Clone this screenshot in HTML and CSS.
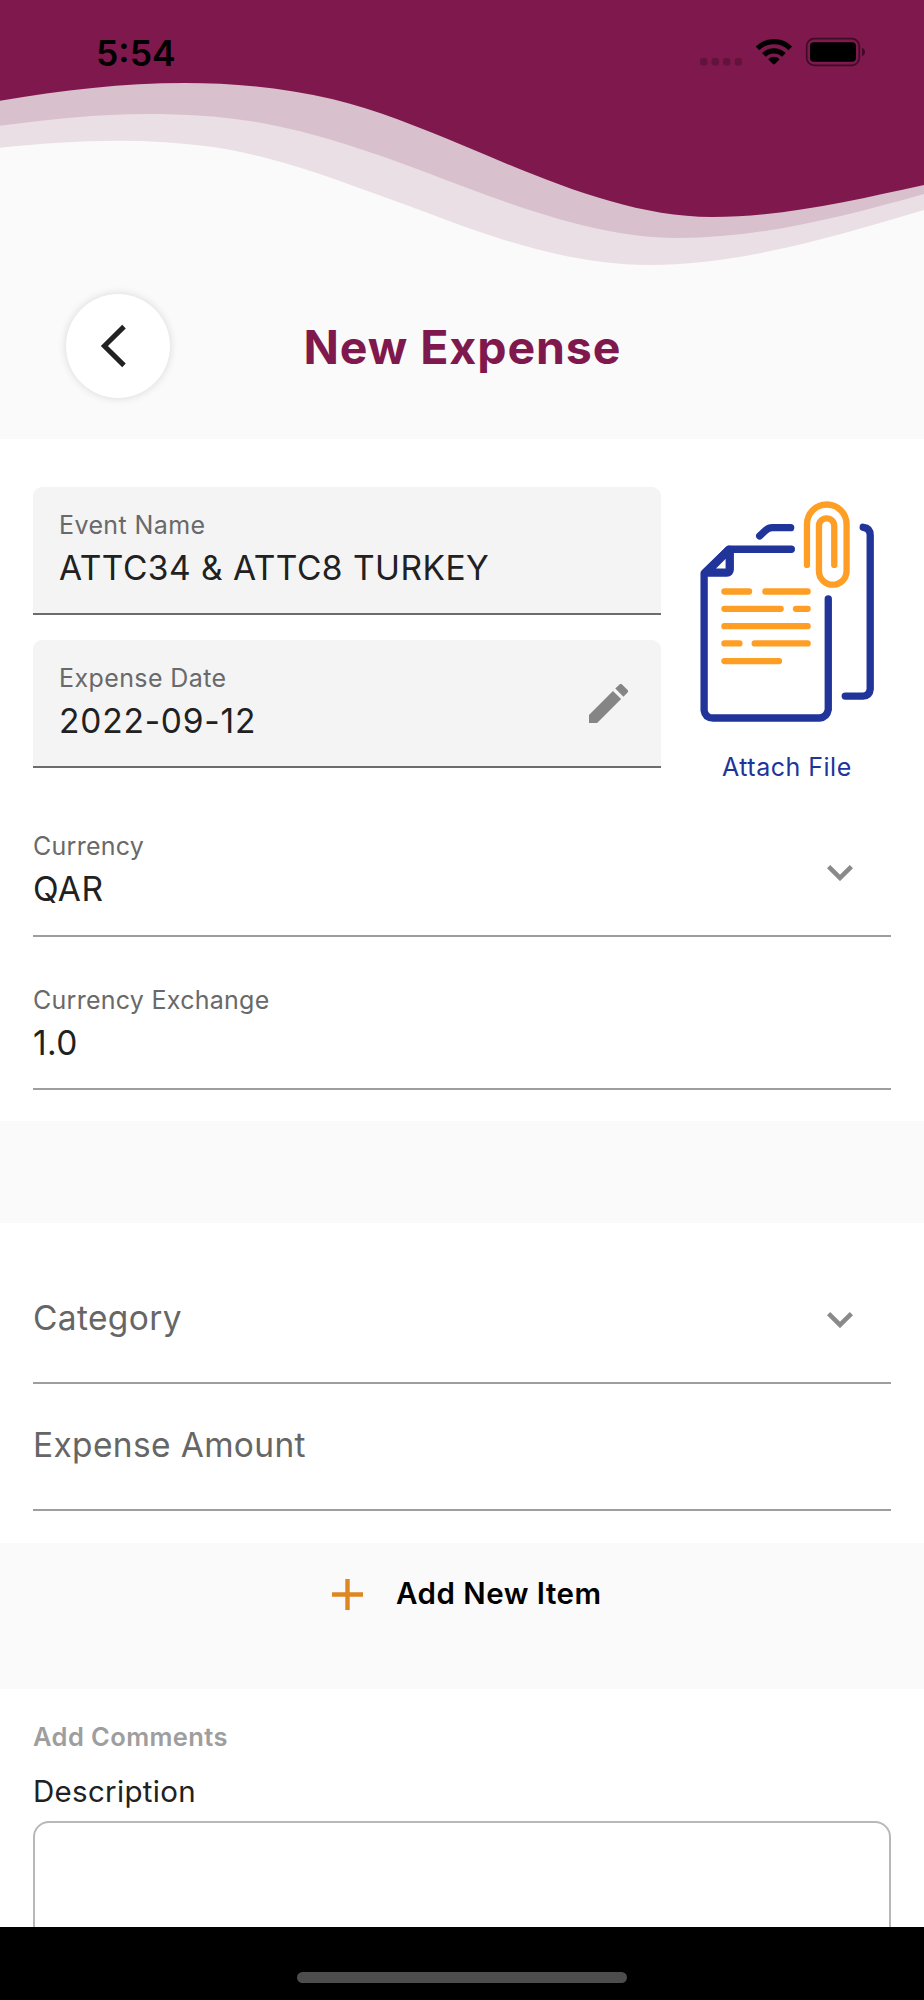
FILE: index.html
```html
<!DOCTYPE html>
<html lang="en">
<head>
<meta charset="utf-8">
<title>New Expense</title>
<link rel="stylesheet" href="styles.css">
</head>
<body>
<div class="screen">
  <header class="header">
    <svg class="waves" viewBox="0 0 924 280" aria-hidden="true">
      <path fill="#eadfe5" d="M0 0V147.7C39 143.8 78 140.7 117 140.7C149 140.7 181 142.5 213 147C231 149.6 249 153.8 267 158.3C311 169.3 356 187.1 400 202.7C421 210.1 441 218.3 462 225.7C524 248.1 587 265 649 265C741 265 832 237 924 210V0Z"/>
      <path fill="#d8c1cd" d="M0 0V125.8C49 119.4 98 114 147 114C187 114 227 116.4 267 124C311 132.4 356 146.9 400 162.7C421 170.1 441 178.3 462 186C534 213 606 238 678 238C760 238 842 217 924 194V0Z"/>
      <path fill="#7f184d" d="M0 0V100.7C62 90.2 123 83 185 83C234 83 284 87.8 333 99.3C376 109.5 419 127.4 462 145C545 180 629 217 712 217C783 217 853 200.5 924 185V0Z"/>
    </svg>
    <div class="status">
      <span class="clock">5:54</span>
      <svg class="indicators" viewBox="0 0 170 34" aria-hidden="true">
        <g fill="#000" fill-opacity=".22">
          <rect x="4" y="23" width="7.4" height="7.6" rx="2.4"/>
          <rect x="15.6" y="23" width="7.4" height="7.6" rx="2.4"/>
          <rect x="27" y="23" width="7.4" height="7.6" rx="2.4"/>
          <rect x="38.6" y="23" width="7.4" height="7.6" rx="2.4"/>
        </g>
        <g fill="none" stroke="#000" stroke-width="5.2">
          <path d="M61.5 13.3A23.5 23.5 0 0 1 94.3 13.3"/>
          <path d="M67.9 19.9A14.3 14.3 0 0 1 87.9 19.9"/>
        </g>
        <path d="M72.2 24.2A8 8 0 0 1 83.6 24.2L78.900 29.100Q77.900 30 76.900 29.100Z"/>
        <rect x="110.700" y="3.700" width="52.600" height="26.600" rx="7.500" fill="none" stroke="#000" stroke-opacity=".5" stroke-width="1.700"/>
        <rect x="114" y="7.200" width="46" height="19.600" rx="4"/>
        <path fill-opacity=".5" d="M166 12.700Q169 14 169 17T166 21.300Z"/>
      </svg>
    </div>
    <div class="titlebar">
      <button class="back" aria-label="Back">
        <svg viewBox="0 0 104 104" aria-hidden="true"><path d="M58 32.600L38.400 52L58 71.400" fill="none" stroke="#222" stroke-width="5"/></svg>
      </button>
      <h1 class="title">New Expense</h1>
    </div>
  </header>

  <section class="card details">
    <div class="top">
      <div class="filled-fields">
        <div class="field filled">
          <label class="label event-label">Event Name</label>
          <div class="value event-value">ATTC34 &amp; ATTC8 TURKEY</div>
        </div>
        <div class="field filled">
          <label class="label">Expense Date</label>
          <div class="value date-value">2022-09-12</div>
          <svg class="pencil" viewBox="3 3 18 18" aria-hidden="true"><path fill="#858585" d="M3 17.250V21h3.750L17.810 9.940l-3.750-3.750L3 17.250zM20.710 7.040a1 1 0 0 0 0-1.410l-2.340-2.340a1 1 0 0 0-1.410 0l-1.830 1.830 3.750 3.750 1.830-1.830z"/></svg>
        </div>
      </div>
      <div class="attach">
        <svg class="files" viewBox="50 60 540 670" fill="none" stroke-linecap="round" stroke-linejoin="round" aria-hidden="true">
          <g stroke="#20349a" stroke-width="22">
            <path d="M238 168L254 153Q264 143 276 143H331"/>
            <path d="M549 142Q570 144 570 166V628Q568 648 548 649H495"/>
            <path d="M333 208H145L71 280V692Q74 715 98 715H418Q440 713 444 690V357"/>
            <path stroke-width="25" d="M148 210V269Q148 278 139 278H77L145 210"/>
          </g>
          <g stroke="#ff9e24" stroke-width="19">
            <path d="M380 255V133A59 59 0 0 1 499 133V273A41 41 0 0 1 416 273V138A23 23 0 0 1 462 138V255"/>
            <path d="M132 335H206M255 335H382M132 387H301M347 387H382M132 439H382M132 491H177M223 491H382M132 544H296"/>
          </g>
        </svg>
        <a class="attach-text">Attach File</a>
      </div>
    </div>
    <div class="field plain">
      <label class="label currency-label">Currency</label>
      <div class="value qar">QAR</div>
      <svg class="chevron" viewBox="0 0 26 16" aria-hidden="true"><path d="M1.600 1.700L13 12.900L24.400 1.700" fill="none" stroke="#8a8a8a" stroke-width="4.600"/></svg>
    </div>
    <div class="field plain second">
      <label class="label exchange-label">Currency Exchange</label>
      <div class="value rate">1.0</div>
    </div>
  </section>

  <section class="card item">
    <div class="field empty">
      <div class="placeholder">Category</div>
      <svg class="chevron" viewBox="0 0 26 16" aria-hidden="true"><path d="M1.600 1.700L13 12.900L24.400 1.700" fill="none" stroke="#8a8a8a" stroke-width="4.600"/></svg>
    </div>
    <div class="field empty amount">
      <div class="placeholder">Expense Amount</div>
    </div>
  </section>

  <div class="add">
    <svg class="plus" viewBox="0 0 31 31" aria-hidden="true"><path d="M15.500 0V31M0 15.500H31" stroke="#dd8722" stroke-width="4.400"/></svg>
    <span class="add-text">Add New Item</span>
  </div>

  <section class="card comments">
    <h2 class="comments-title">Add Comments</h2>
    <div class="description">Description</div>
    <div class="textarea"></div>
  </section>

  <footer class="home"><div class="home-bar"></div></footer>
</div>
</body>
</html>
```

FILE: styles.css
```css
* { box-sizing: border-box; }
body { margin: 0; background: #fafafa; font-family: Inter, "Liberation Sans", sans-serif; color: #212121; }
.screen { width: 924px; height: 2000px; overflow: hidden; display: flex; flex-direction: column; background: #fafafa; }

.header { position: relative; height: 439px; flex: none; }
.waves { position: absolute; left: 0; top: 0; width: 924px; height: 280px; }
.status { position: relative; display: flex; justify-content: space-between; padding: 31px 58px 0 96px; height: 294px; }
.clock { font-size: 35.5px; line-height: 44px; font-weight: 600; color: #000; margin-top: 1px; }
.indicators { width: 170px; height: 34px; margin-top: 4px; }
.titlebar { position: relative; display: flex; align-items: center; padding-left: 66px; }
.back { width: 104px; height: 104px; border: 0; padding: 0; border-radius: 50%; background: #fff; box-shadow: 0 0 9px rgba(0,0,0,.14); }
.back svg { display: block; width: 104px; height: 104px; }
.title { margin: 1px 0 0 133.5px; font-size: 46.5px; line-height: 58px; font-weight: 700; color: #7f184d; letter-spacing: .9px; white-space: nowrap; }

.card { background: #fff; padding: 0 33px; flex: none; }
.details { height: 682px; padding-top: 48px; }
.top { display: flex; height: 297px; }
.filled-fields { width: 628px; display: flex; flex-direction: column; gap: 25px; }
.field { position: relative; border-bottom: 2px solid #9e9e9e; }
.filled { height: 128px; padding: 22.5px 26px 0; background: #f4f4f4; border-radius: 9px 9px 0 0; border-color: #6c6c6c; }
.label { display: block; font-size: 25px; line-height: 30px; color: #696969; letter-spacing: .4px; white-space: nowrap; }
.currency-label, .exchange-label { letter-spacing: .27px; }
.value { margin-top: 8px; font-size: 33.5px; line-height: 40px; color: #212121; letter-spacing: .4px; white-space: nowrap; }
.event-value { letter-spacing: .47px; }
.date-value { letter-spacing: .8px; }
.pencil { position: absolute; right: 33px; top: 43.5px; width: 39px; height: 39px; }
.attach { width: 198px; margin-left: 32px; padding-top: 13px; display: flex; flex-direction: column; }
.files { width: 180px; height: 223px; margin-left: 3.7px; }
.attach-text { margin-top: 29px; padding-left: 29px; font-size: 25px; line-height: 30px; color: #20349a; letter-spacing: .5px; white-space: nowrap; }
.plain { height: 153px; padding-top: 47px; }
.second .label { margin-top: 1px; }
.chevron { position: absolute; right: 38.5px; width: 26px; height: 16px; }
.plain .chevron { top: 80.5px; }

.item { margin-top: 102px; height: 320px; }
.empty { height: 161px; padding-top: 75px; }
.empty .chevron { top: 88.5px; }
.amount { height: 127px; padding-top: 41px; }
.placeholder { font-size: 33.5px; line-height: 40px; color: #666; letter-spacing: .35px; white-space: nowrap; }

.add { flex: none; height: 146px; padding: 36px 0 0 332px; display: flex; align-items: flex-start; gap: 33px; color: #000; }
.plus { width: 31px; height: 31px; }
.add-text { margin-top: -4px; font-size: 29.5px; line-height: 36px; font-weight: 600; letter-spacing: .5px; white-space: nowrap; }

.comments { height: 238px; padding-top: 33px; overflow: hidden; }
.comments-title { margin: 0; font-size: 25.5px; line-height: 30px; font-weight: 600; color: #9e9e9e; letter-spacing: .4px; white-space: nowrap; }
.description { margin-top: 21px; font-size: 29.5px; line-height: 36px; letter-spacing: .3px; }
.textarea { margin-top: 12px; height: 200px; border: 2px solid #b8b8b8; border-radius: 16px; }

.home { flex: none; height: 74px; background: #000; padding-top: 45px; }
.home-bar { width: 330px; height: 11px; margin: 0 auto; border-radius: 6px; background: #4d4d4d; }
```
